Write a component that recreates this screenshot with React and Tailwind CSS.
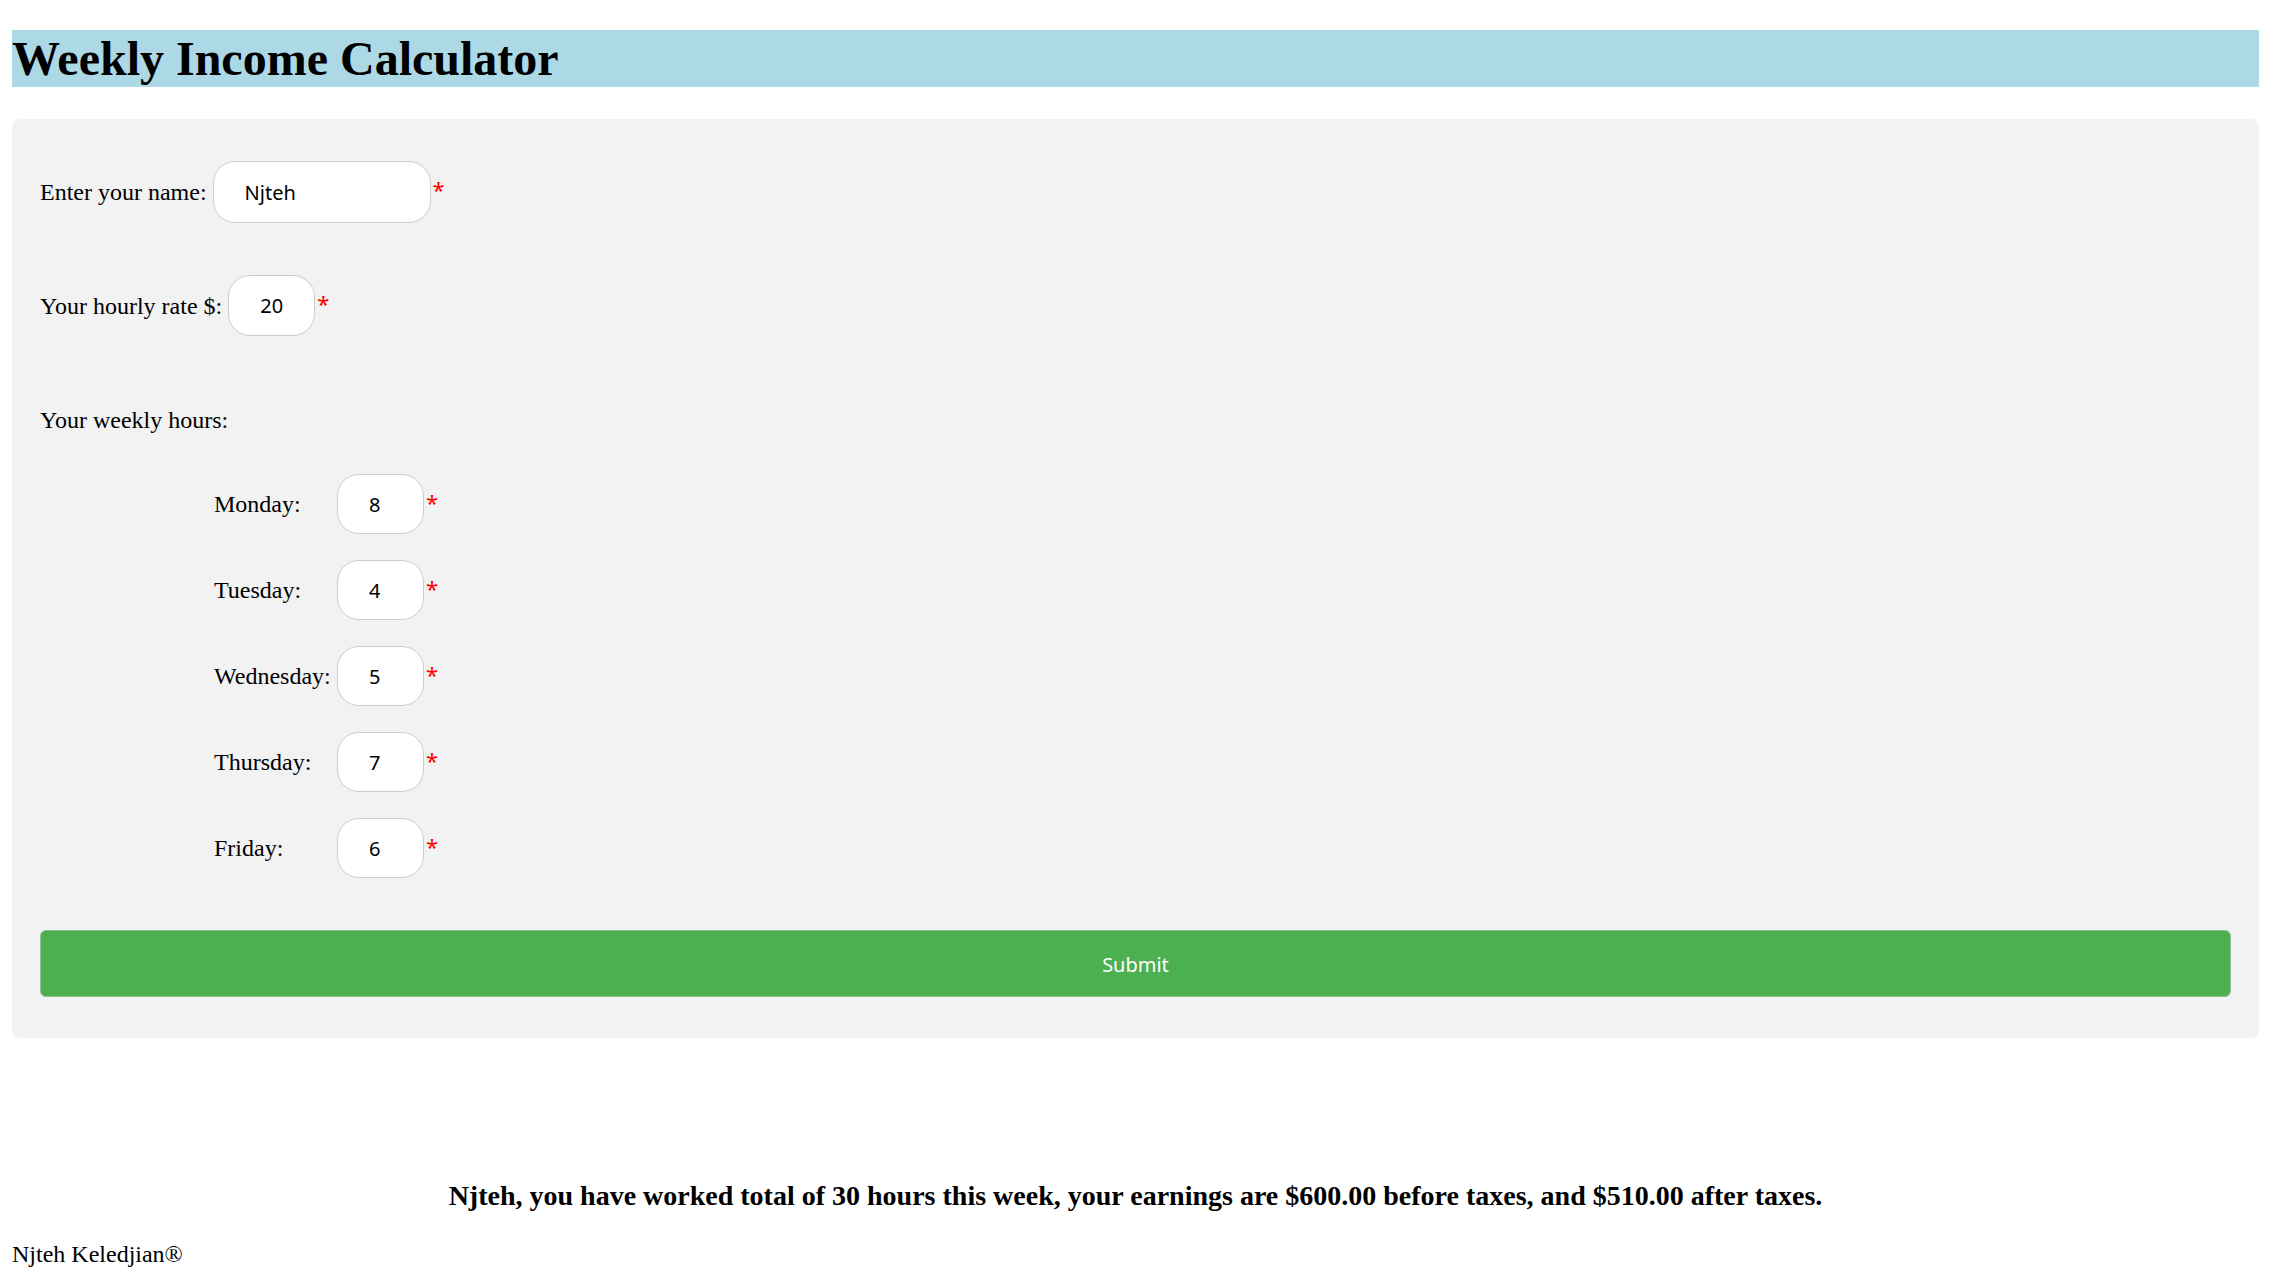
import React from "react";

const serif = { fontFamily: '"Liberation Serif", "Times New Roman", serif' };

function Star() {
  return (
    <span className="ml-[2px] self-start mt-[17px] text-[22px] leading-none text-[#ff0000]" style={{ fontFamily: '"Noto Sans", sans-serif' }}>
      *
    </span>
  );
}

function Field({ value, width }) {
  return (
    <input
      readOnly
      value={value}
      className={`${width} h-full rounded-[22px] border border-[#cccccc] bg-white pl-[31px] text-[20px] text-black outline-none`}
      style={{ fontFamily: '"Noto Sans", "Open Sans", sans-serif' }}
    />
  );
}

function Day({ label, value }) {
  return (
    <div className="flex h-[60px] items-center pl-[174px]">
      <span className="w-[123px] shrink-0 text-[24px] text-black">{label}</span>
      <div className="flex h-[60px] items-center">
        <Field value={value} width="w-[87px]" />
        <Star />
      </div>
    </div>
  );
}

export default function App() {
  return (
    <div className="min-h-[1276px] bg-white px-[12px] text-black" style={serif}>
      <h1 className="mt-[30px] h-[57px] bg-[#add8e6] text-[48px] font-bold leading-[57px]">
        Weekly Income Calculator
      </h1>

      <div className="mt-[32px] flex flex-col rounded-[8px] bg-[#f2f2f2] px-[28px] pt-[42px] pb-[41px]">
        <div className="flex h-[62px] items-center">
          <span className="mr-[6px] text-[24px]">Enter your name:</span>
          <div className="flex h-[62px] items-center">
            <Field value="Njteh" width="w-[218px]" />
            <Star />
          </div>
        </div>

        <div className="mt-[52px] flex h-[61px] items-center">
          <span className="mr-[6px] text-[24px]">Your hourly rate $:</span>
          <div className="flex h-[61px] items-center">
            <Field value="20" width="w-[87px]" />
            <Star />
          </div>
        </div>

        <div className="mt-[70px] text-[24px] leading-[28px]">Your weekly hours:</div>

        <div className="mt-[40px] flex flex-col gap-[26px]">
          <Day label="Monday:" value="8" />
          <Day label="Tuesday:" value="4" />
          <Day label="Wednesday:" value="5" />
          <Day label="Thursday:" value="7" />
          <Day label="Friday:" value="6" />
        </div>

        <button
          className="mt-[52px] h-[67px] w-full rounded-[6px] border border-[#8fbf90] bg-[#4caf50] pt-[2px] text-[20px] text-white"
          style={{ fontFamily: '"Noto Sans", "Open Sans", sans-serif' }}
        >
          Submit
        </button>
      </div>

      <p className="mt-[142px] text-center text-[28px] font-bold leading-[32px]">
        Njteh, you have worked total of 30 hours this week, your earnings are $600.00 before taxes, and $510.00 after taxes.
      </p>

      <p className="mt-[28px] text-[24px] leading-[28px]">Njteh Keledjian®</p>
    </div>
  );
}
